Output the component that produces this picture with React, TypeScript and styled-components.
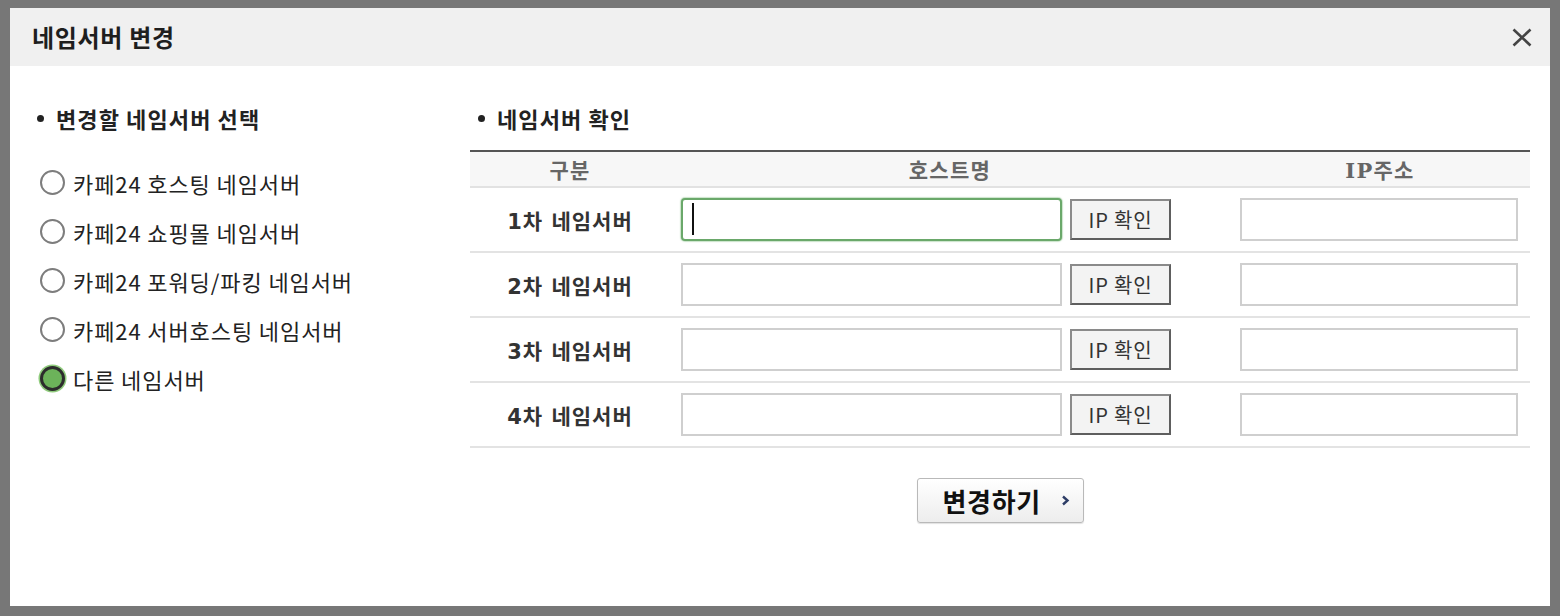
import React from "react";
import styled, { createGlobalStyle } from "styled-components";

const GlobalStyle = createGlobalStyle`
  html, body { margin: 0; padding: 0; background: #777; }
  body { font-family: "Noto Sans CJK KR", "Noto Sans", sans-serif; color: #222; }
  * { box-sizing: border-box; }
`;

const Overlay = styled.div`
  width: 1560px;
  height: 616px;
  padding: 8px 10px 10px;
  background: #777;
`;

const Dialog = styled.div`
  height: 100%;
  background: #fff;
  display: flex;
  flex-direction: column;
`;

const TitleBar = styled.div`
  height: 58px;
  flex: none;
  background: #f0f0f0;
  display: flex;
  align-items: center;
  justify-content: space-between;
  padding: 0 18px 0 22px;
`;

const Title = styled.h1`
  margin: 0;
  font-size: 24px;
  font-weight: 700;
  letter-spacing: 0.7px;
  color: #1e1e1e;
  line-height: 1;
`;

const CloseButton = styled.button`
  border: 0;
  padding: 0;
  background: none;
  width: 20px;
  height: 20px;
  display: flex;
  align-items: center;
  justify-content: center;
  cursor: pointer;
`;

const Body = styled.div`
  display: flex;
  padding: 38px 20px 0 27px;
`;

const LeftCol = styled.div`
  width: 433px;
  flex: none;
`;

const RightCol = styled.div`
  flex: 1;
`;

const SectionTitle = styled.h2<{ $indent?: number }>`
  margin: 0;
  height: 28px;
  display: flex;
  align-items: center;
  gap: 12px;
  padding-left: ${(p) => p.$indent ?? 0}px;
  font-size: 22px;
  font-weight: 700;
  letter-spacing: 1.1px;
  color: #222;
  &::before {
    content: "";
    width: 7px;
    height: 7px;
    border-radius: 50%;
    background: #222;
  }
`;

const RadioList = styled.ul`
  list-style: none;
  margin: 26px 0 0;
  padding: 0 0 0 3px;
`;

const RadioItem = styled.li`
  height: 49px;
  display: flex;
  align-items: center;
  gap: 8px;
  font-size: 22px;
  letter-spacing: 0.9px;
  color: #222;
`;

const RadioCircle = styled.span<{ $checked?: boolean }>`
  width: 25px;
  height: 25px;
  flex: none;
  border-radius: 50%;
  border: ${(p) => (p.$checked ? "3.5px solid #2c2c2c" : "2px solid #7d7d7d")};
  background: ${(p) => (p.$checked ? "#6cb35a" : "#fff")};
  box-shadow: ${(p) => (p.$checked ? "0 0 0 1.5px #8fcb7c" : "none")};
`;

const Table = styled.div`
  margin-top: 18px;
  border-top: 2px solid #555;
`;

const HeaderRow = styled.div`
  display: grid;
  grid-template-columns: 200px 560px 1fr;
  height: 36px;
  background: #f7f7f7;
  border-bottom: 2px solid #e2e2e2;
  align-items: center;
`;

const HeaderCell = styled.div`
  text-align: center;
  font-family: "DejaVu Serif", "Noto Sans CJK KR", serif;
  font-size: 21px;
  font-weight: 700;
  letter-spacing: 1.3px;
  color: #666;
`;

const Row = styled.div`
  display: grid;
  grid-template-columns: 200px 560px 1fr;
  height: 65px;
  border-bottom: 2px solid #e3e3e3;
  align-items: center;
`;

const RowLabel = styled.div`
  text-align: center;
  font-family: "DejaVu Sans", "Noto Sans CJK KR", sans-serif;
  font-size: 21px;
  font-weight: 700;
  letter-spacing: 1px;
  color: #333;
`;

const HostCell = styled.div`
  display: flex;
  align-items: center;
  gap: 8px;
  padding-left: 11px;
`;

const IpCell = styled.div`
  padding-left: 10px;
  display: flex;
  align-items: center;
`;

const InputWrap = styled.div`
  position: relative;
  display: flex;
`;

const TextInput = styled.input<{ $w: number; $focused?: boolean }>`
  width: ${(p) => p.$w}px;
  height: 43px;
  margin: 0;
  padding: 0 10px;
  font-size: 18px;
  font-family: "Noto Sans CJK KR", sans-serif;
  background: #fff;
  outline: none;
  border: 2px solid ${(p) => (p.$focused ? "#6aa86a" : "#cfcfcf")};
  border-radius: ${(p) => (p.$focused ? "4px" : "0")};
  box-shadow: ${(p) => (p.$focused ? "0 0 1px 1px rgba(150, 200, 150, 0.5)" : "none")};
`;

const Caret = styled.span`
  position: absolute;
  left: 11px;
  top: 5px;
  width: 2px;
  height: 32px;
  background: #111;
`;

const IpButton = styled.button`
  width: 101px;
  height: 41px;
  margin: 0;
  padding: 0;
  font-family: "Noto Sans CJK KR", sans-serif;
  font-size: 20px;
  letter-spacing: 0.8px;
  color: #333;
  background: #f3f3f3;
  border: 2px solid;
  border-color: #8a8a8a #5e5e5e #5e5e5e #8a8a8a;
  cursor: pointer;
`;

const ButtonRow = styled.div`
  display: flex;
  justify-content: center;
  margin-top: 30px;
`;

const SubmitButton = styled.button`
  width: 167px;
  height: 45px;
  display: flex;
  align-items: center;
  gap: 20px;
  padding: 0 0 0 25px;
  border: 1px solid #b9b9b9;
  border-radius: 3px;
  background: linear-gradient(#ffffff, #ededed);
  box-shadow: 0 1px 1px rgba(0, 0, 0, 0.12);
  font-family: "Noto Sans CJK KR", sans-serif;
  font-size: 26px;
  font-weight: 700;
  letter-spacing: 0.7px;
  color: #111;
  cursor: pointer;
`;

const radioOptions = [
  { label: "카페24 호스팅 네임서버", checked: false },
  { label: "카페24 쇼핑몰 네임서버", checked: false },
  { label: "카페24 포워딩/파킹 네임서버", checked: false },
  { label: "카페24 서버호스팅 네임서버", checked: false },
  { label: "다른 네임서버", checked: true },
];

const rows = ["1차 네임서버", "2차 네임서버", "3차 네임서버", "4차 네임서버"];

export default function App() {
  return (
    <>
      <GlobalStyle />
      <Overlay>
        <Dialog>
          <TitleBar>
            <Title>네임서버 변경</Title>
            <CloseButton aria-label="닫기">
              <svg width="20" height="19" viewBox="0 0 20 19">
                <path d="M1.5 1.5 L18.5 17.5 M18.5 1.5 L1.5 17.5" stroke="#444" strokeWidth="2.6" strokeLinecap="butt" />
              </svg>
            </CloseButton>
          </TitleBar>
          <Body>
            <LeftCol>
              <SectionTitle>변경할 네임서버 선택</SectionTitle>
              <RadioList>
                {radioOptions.map((o) => (
                  <RadioItem key={o.label}>
                    <RadioCircle $checked={o.checked} />
                    {o.label}
                  </RadioItem>
                ))}
              </RadioList>
            </LeftCol>
            <RightCol>
              <SectionTitle $indent={8}>네임서버 확인</SectionTitle>
              <Table>
                <HeaderRow>
                  <HeaderCell>구분</HeaderCell>
                  <HeaderCell>호스트명</HeaderCell>
                  <HeaderCell>IP주소</HeaderCell>
                </HeaderRow>
                {rows.map((r, i) => (
                  <Row key={r}>
                    <RowLabel>{r}</RowLabel>
                    <HostCell>
                      <InputWrap>
                        <TextInput $w={381} $focused={i === 0} />
                        {i === 0 && <Caret />}
                      </InputWrap>
                      <IpButton>IP 확인</IpButton>
                    </HostCell>
                    <IpCell>
                      <TextInput $w={278} />
                    </IpCell>
                  </Row>
                ))}
              </Table>
              <ButtonRow>
                <SubmitButton>
                  변경하기
                  <svg width="9" height="11" viewBox="0 0 9 11">
                    <path d="M2 1.5 L6.5 5.5 L2 9.5" fill="none" stroke="#2d3d66" strokeWidth="2.4" />
                  </svg>
                </SubmitButton>
              </ButtonRow>
            </RightCol>
          </Body>
        </Dialog>
      </Overlay>
    </>
  );
}
